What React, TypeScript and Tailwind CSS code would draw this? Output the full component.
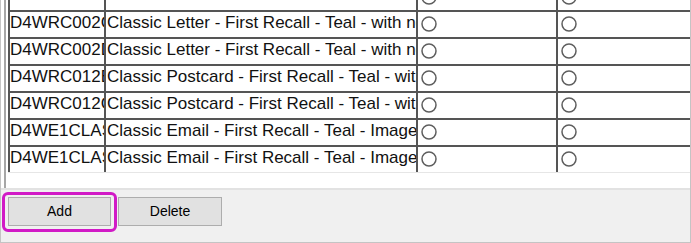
const rows = [
  { code: "", name: "" },
  { code: "D4WRC002C", name: "Classic Letter - First Recall - Teal - with no image" },
  { code: "D4WRC002D", name: "Classic Letter - First Recall - Teal - with no image" },
  { code: "D4WRC012B", name: "Classic Postcard - First Recall - Teal - with image" },
  { code: "D4WRC012C", name: "Classic Postcard - First Recall - Teal - with image" },
  { code: "D4WE1CLAS", name: "Classic Email - First Recall - Teal - Image" },
  { code: "D4WE1CLAS", name: "Classic Email - First Recall - Teal - Image" },
];

function Radio() {
  return (
    <svg width="16" height="16" viewBox="0 0 16 16" className="block w-[16px] h-[16px] max-w-none">
      <circle cx="8" cy="8" r="7" fill="white" stroke="#5e5e5e" strokeWidth="1.5" />
    </svg>
  );
}

function Row({ code, name, first }: { code: string; name: string; first?: boolean }) {
  return (
    <div className={`flex h-[27px] border-t-2 border-[#555] ${first ? "-mt-[17px]" : ""}`}>
      <div className="w-[96px] shrink-0 border-l-2 border-[#555] overflow-hidden whitespace-nowrap pt-px leading-[19px]">
        {code}
      </div>
      <div className="w-[312px] shrink-0 border-l-2 border-[#555] overflow-hidden whitespace-nowrap pl-px pt-px leading-[19px]">
        {name}
      </div>
      <div className="w-[140px] shrink-0 border-l-2 border-[#555] pl-[3px] pt-[4px]">
        <Radio />
      </div>
      <div className="flex-1 border-l-2 border-[#555] pl-[3px] pt-[4px]">
        <Radio />
      </div>
    </div>
  );
}

export default function App() {
  return (
    <div
      className="w-[691px] h-[243px] bg-white border-x border-b border-[#c4c4c4] flex flex-col overflow-hidden text-[17px] text-[#111]"
      style={{ fontFamily: '"Liberation Sans", Arial, sans-serif' }}
    >
      <div className="h-[188px] shrink-0 ml-[3px] pl-[2px] border-l-2 border-[#a6a6a6] overflow-hidden">
        <div className="border-b border-[#e6e6e6]">
          {rows.map((r, i) => (
            <Row key={i} code={r.code} name={r.name} first={i === 0} />
          ))}
        </div>
      </div>
      <div className="flex-1 bg-[#f0f0f0] border-t-2 border-[#e2e2e2] pl-[7px] pt-[7px] flex items-start gap-[7px] text-[14px] text-black">
        <div className="relative">
          <button className="block w-[103px] h-[29px] bg-[#e1e1e1] border border-[#adadad]">Add</button>
          <span className="absolute -left-[6px] -right-[6px] -top-[5px] -bottom-[6px] border-[3px] border-[#d11ac6] rounded-[6px] pointer-events-none" />
        </div>
        <button className="block w-[104px] h-[29px] bg-[#e1e1e1] border border-[#adadad]">Delete</button>
      </div>
    </div>
  );
}
